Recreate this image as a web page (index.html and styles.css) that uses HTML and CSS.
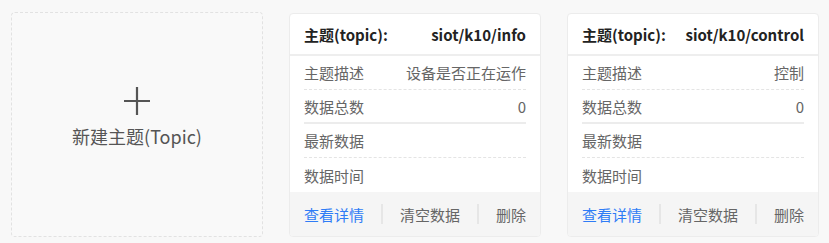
FILE: index.html
```html
<!DOCTYPE html>
<html lang="zh">
<head>
<meta charset="utf-8">
<link rel="stylesheet" href="styles.css">
</head>
<body>
<div class="grid">
  <div class="add-card">
    <svg class="plus" width="26" height="28" viewBox="0 0 26 28"><path d="M13 0V28M0 14H26" stroke="#555" stroke-width="2.2" fill="none"/></svg>
    <div class="add-text">新建主题(Topic)</div>
  </div>

  <div class="card">
    <div class="card-head"><span>主题(topic):</span><span>siot/k10/info</span></div>
    <div class="card-body">
      <div class="row dashed"><span>主题描述</span><span>设备是否正在运作</span></div>
      <div class="row solid"><span>数据总数</span><span>0</span></div>
      <div class="row dashed"><span>最新数据</span><span></span></div>
      <div class="row"><span>数据时间</span><span></span></div>
    </div>
    <div class="card-foot">
      <span class="link">查看详情</span><i class="sep"></i><span>清空数据</span><i class="sep"></i><span>删除</span>
    </div>
  </div>

  <div class="card">
    <div class="card-head"><span>主题(topic):</span><span>siot/k10/control</span></div>
    <div class="card-body">
      <div class="row dashed"><span>主题描述</span><span>控制</span></div>
      <div class="row solid"><span>数据总数</span><span>0</span></div>
      <div class="row dashed"><span>最新数据</span><span></span></div>
      <div class="row"><span>数据时间</span><span></span></div>
    </div>
    <div class="card-foot">
      <span class="link">查看详情</span><i class="sep"></i><span>清空数据</span><i class="sep"></i><span>删除</span>
    </div>
  </div>
</div>
</body>
</html>
```

FILE: styles.css
```css
html, body {
  margin: 0;
  background: #f8f8f8;
}
body {
  font-family: "Noto Sans CJK SC", "Noto Sans", sans-serif;
  color: #555;
}
.grid {
  display: grid;
  grid-template-columns: repeat(3, 252px);
  column-gap: 26px;
  padding: 12px 11px 0 11px;
}
.add-card {
  box-sizing: border-box;
  height: 225px;
  border: 1px dashed #e2e2e2;
  border-radius: 4px;
  background: #f9f9f9;
  display: flex;
  flex-direction: column;
  align-items: center;
  justify-content: center;
  padding-bottom: 14px;
}
.plus {
  margin-bottom: 9px;
}
.add-text {
  font-size: 18px;
  line-height: 24px;
  color: #555;
}
.card {
  box-sizing: border-box;
  height: 224px;
  margin-top: 1px;
  border: 1px solid #ececec;
  border-radius: 4px;
  background: #fff;
  overflow: hidden;
  display: flex;
  flex-direction: column;
}
.card-head {
  height: 40px;
  border-bottom: 2px solid #eeeeee;
  display: flex;
  justify-content: space-between;
  align-items: center;
  padding: 0 14px;
  font-weight: 700;
  font-size: 15px;
  color: #222;
}
.card-body {
  padding: 0 14px;
  flex: 1;
}
.row {
  height: 34px;
  display: flex;
  justify-content: space-between;
  align-items: center;
  font-size: 15px;
  color: #666;
  box-sizing: border-box;
}
.row.dashed {
  border-bottom: 1px dashed #e4e4e4;
}
.row.solid {
  border-bottom: 2px solid #ececec;
}
.card-foot {
  height: 44px;
  background: #f5f5f5;
  display: flex;
  justify-content: space-between;
  align-items: center;
  padding: 0 14px;
  font-size: 15px;
  color: #666;
}
.link {
  color: #2f7cf6;
}
.sep {
  width: 2px;
  height: 20px;
  background: #e6e6e6;
}
```
